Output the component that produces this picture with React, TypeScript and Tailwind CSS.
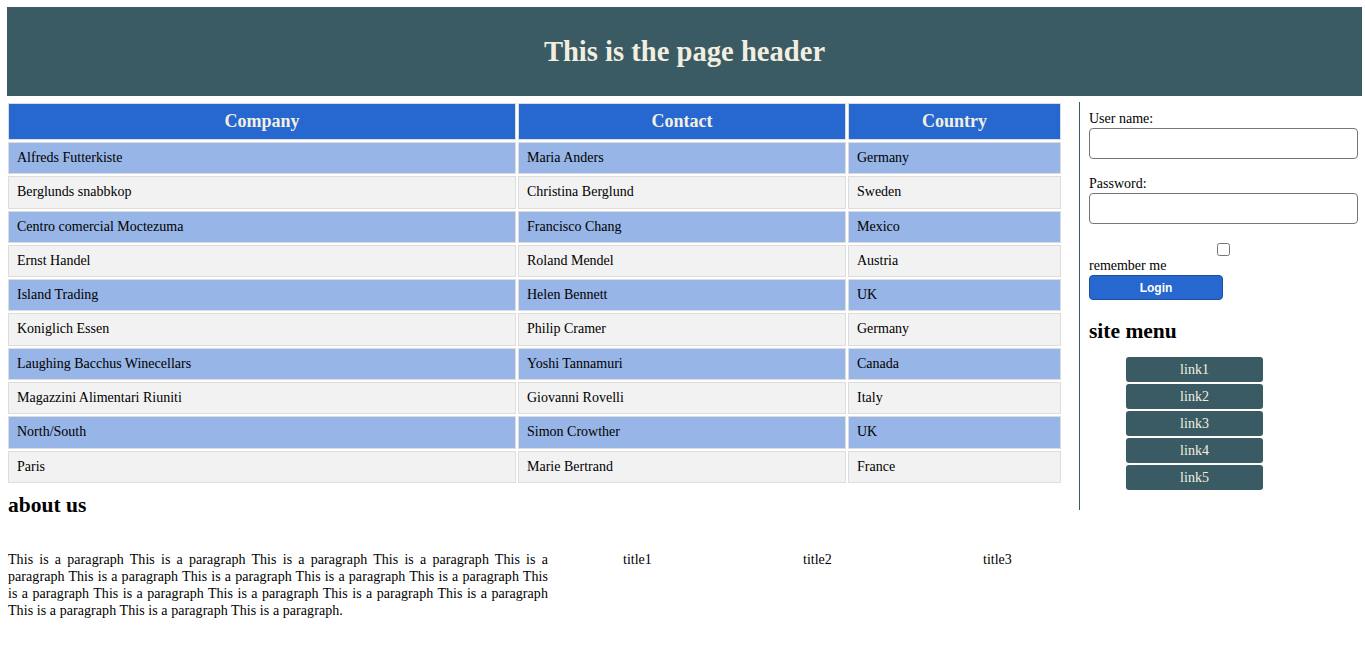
import React from "react";

const rows = [
  ["Alfreds Futterkiste", "Maria Anders", "Germany"],
  ["Berglunds snabbkop", "Christina Berglund", "Sweden"],
  ["Centro comercial Moctezuma", "Francisco Chang", "Mexico"],
  ["Ernst Handel", "Roland Mendel", "Austria"],
  ["Island Trading", "Helen Bennett", "UK"],
  ["Koniglich Essen", "Philip Cramer", "Germany"],
  ["Laughing Bacchus Winecellars", "Yoshi Tannamuri", "Canada"],
  ["Magazzini Alimentari Riuniti", "Giovanni Rovelli", "Italy"],
  ["North/South", "Simon Crowther", "UK"],
  ["Paris", "Marie Bertrand", "France"],
];

const para = Array(17).fill("This is a paragraph").join(" ") + ".";

export default function App() {
  return (
    <div className="px-[7px] pt-[7px] pb-[20px] font-['Liberation_Serif',serif] text-[14px] text-black bg-white min-h-[647px]">
      <header className="w-[1355px] h-[89px] bg-[#3a5a64] flex items-center justify-center">
        <h1 className="text-[28.6px] leading-[32px] font-bold text-[#f3efe0]">This is the page header</h1>
      </header>
      <div className="flex mt-[5px] items-start">
        <main className="w-[1056px] shrink-0">
          <table className="-ml-[1px] table-fixed border-separate border-spacing-[2px]">
            <colgroup>
              <col className="w-[508px]" />
              <col className="w-[328px]" />
              <col className="w-[213px]" />
            </colgroup>
            <thead>
              <tr>
                {["Company", "Contact", "Country"].map((h) => (
                  <th
                    key={h}
                    className="bg-[#2767d0] border border-[#dddddd] text-[#f3efe0] text-[18px] leading-[21px] font-bold py-[7px] text-center"
                  >
                    {h}
                  </th>
                ))}
              </tr>
            </thead>
            <tbody>
              {rows.map((r, i) => (
                <tr key={i}>
                  {r.map((c, j) => (
                    <td
                      key={j}
                      className={
                        "border border-[#dddddd] px-[8px] py-[7px] leading-[16.3px] text-left " +
                        (i % 2 === 0 ? "bg-[#97b5e6]" : "bg-[#f2f2f2]")
                      }
                    >
                      {c}
                    </td>
                  ))}
                </tr>
              ))}
            </tbody>
          </table>
          <h2 className="mt-[8px] ml-[1px] text-[21.5px] leading-[24px] font-bold">about us</h2>
          <div className="flex mt-[34px] items-start">
            <p className="w-[540px] ml-[1px] text-justify leading-[17px] tracking-[0.07px] shrink-0">{para}</p>
            <div className="flex ml-[75px] leading-[17px]">
              <div className="w-[180px]">title1</div>
              <div className="w-[180px]">title2</div>
              <div className="w-[180px]">title3</div>
            </div>
          </div>
        </main>
        <aside className="ml-[16px] mt-[1px] w-[283px] h-[408px] border-l border-[#3a5a64] pl-[9px] pr-[4px] pt-[9px] shrink-0">
          <div className="leading-[16px]">User name:</div>
          <input
            type="text"
            className="block mt-[1px] w-full h-[31px] border border-[#767676] rounded-[4px] bg-white"
          />
          <div className="leading-[16px] mt-[17px]">Password:</div>
          <input
            type="password"
            className="block mt-[1px] w-full h-[31px] border border-[#767676] rounded-[4px] bg-white"
          />
          <div className="flex justify-center mt-[19px] h-[13px]">
            <input type="checkbox" className="m-0 w-[13px] h-[13px]" />
          </div>
          <div className="leading-[16px] mt-[2px]">remember me</div>
          <button className="block mt-[1px] w-[134px] h-[25px] rounded-[4px] bg-[#2767d0] border border-[#1d4f9e] text-white font-['Liberation_Sans',sans-serif] font-bold text-[12px]">
            Login
          </button>
          <h2 className="mt-[19px] text-[21.5px] leading-[24px] font-bold">site menu</h2>
          <ul className="mt-[14px] ml-[37px] w-[137px] flex flex-col gap-[2px]">
            {["link1", "link2", "link3", "link4", "link5"].map((l) => (
              <li key={l}>
                <a className="block h-[25px] leading-[25px] text-center bg-[#3a5a64] text-[#f3efe0] rounded-[3px]" href="#">
                  {l}
                </a>
              </li>
            ))}
          </ul>
        </aside>
      </div>
    </div>
  );
}
